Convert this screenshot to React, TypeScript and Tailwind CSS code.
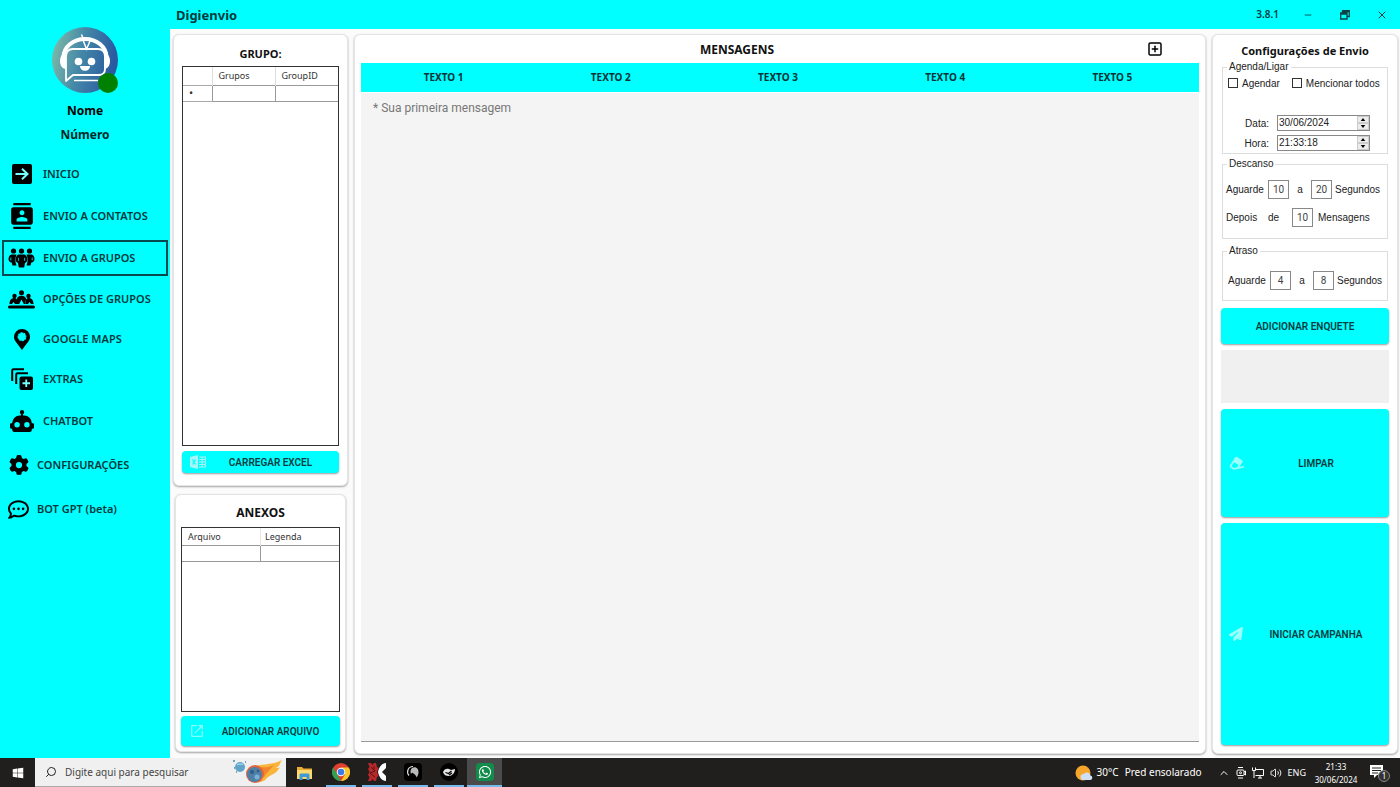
import React from "react";
import { MdContacts, MdOpenInNew } from "react-icons/md";
import { FaGear, FaPaperPlane, FaRegCommentDots } from "react-icons/fa6";
import { FaEraser, FaWhatsapp, FaWindows } from "react-icons/fa";
import { ChevronUp, Search, SquarePlus, Minus, X, Volume2 } from "lucide-react";

function AvatarIcon() {
  return (
    <svg viewBox="0 0 66 66" className="size-full" aria-hidden="true">
      <defs>
        <linearGradient id="avatar" x1="0" y1="0" x2="1" y2="0.2">
          <stop offset="0" stopColor="#86c0a8" />
          <stop offset="0.5" stopColor="#4488a8" />
          <stop offset="1" stopColor="#2a5aa0" />
        </linearGradient>
      </defs>
      <circle cx="33" cy="33" r="33" fill="url(#avatar)" />
      <path d="M11.500 30A21.500 18 0 0 1 54.500 30" fill="none" stroke="#fff" strokeWidth="4" />
      <path d="M14 26c-8 0-8 16 0 16zM52 26c8 0 8 16 0 16z" fill="#fff" />
      <path d="M14 54V30c0-5 2-8 7-8h25c5 0 7 3 7 8v12c0 4-2 6-6 6H21z" fill="none" stroke="#fff" strokeWidth="1.8" strokeLinejoin="round" />
      <path d="M31 13l3.500 9 4-9M29.500 7.500l2 5M22 53.500h24" fill="none" stroke="#fff" strokeWidth="1.500" />
      <circle cx="26.500" cy="34.500" r="3.800" fill="#fff" />
      <circle cx="39.500" cy="34.500" r="3.800" fill="#fff" />
      <path d="M28 39h10c0 3-2 4.800-5 4.800S28 42 28 39z" fill="#fff" />
    </svg>
  );
}

function EnterIcon() {
  return (
    <svg viewBox="0 0 20 20" className="size-5">
      <rect width="20" height="20" rx="2" fill="#000" />
      <path d="M3.500 10h12M10 4.800l5.500 5.200-5.500 5.200" fill="none" stroke="#7ff" strokeWidth="2" />
    </svg>
  );
}

function CrowdIcon() {
  return (
    <svg viewBox="0 0 27 20" className="h-5 w-[27px]">
      <circle cx="5.500" cy="3" r="2.600" />
      <circle cx="13.500" cy="3" r="2.600" />
      <circle cx="21.500" cy="3" r="2.600" />
      <path d="M4 6.500h4.500C7 10 7 14 8.500 17.500H4.500l-.8-3C1.500 14.500.5 12.500.5 11c0-2.500 1.500-4.500 3.500-4.500zM23 6.500h-4.500C20 10 20 14 18.500 17.500h4l.8-3c2.200 0 3.200-2 3.200-3.500 0-2.500-1.500-4.500-3.500-4.500z" />
      <path d="M11 6.500h5c2 0 3.300 2.200 3.300 4.800 0 2-1 3.500-2.300 3.700l-.8 4.500h-5.400L10 15c-1.300-.2-2.300-1.700-2.300-3.700 0-2.600 1.300-4.800 3.300-4.800z" />
      <path d="M2.800 9.500v3M10.400 9.800v3M16.600 9.800v3M24.200 9.500v3" stroke="#0ff" strokeWidth=".8" />
    </svg>
  );
}

function TableGroupIcon() {
  return (
    <svg viewBox="0 0 27 19" className="h-[19px] w-[27px]">
      <circle cx="13.500" cy="2.800" r="2.500" />
      <circle cx="6.500" cy="6" r="2.200" />
      <circle cx="20.500" cy="6" r="2.200" />
      <path d="M9 14V9c0-2 1.800-3.300 4.500-3.300S18 7 18 9v5h-2.200l-2.300-4.500-2.300 4.500zM1.500 14c0-4 2-6 5-6 1.800 0 2.800 1.500 2.800 3v3H7l-1.500-2L4 14zM25.500 14c0-4-2-6-5-6-1.800 0-2.800 1.500-2.800 3v3H20l1.500-2L23 14z" />
      <rect y="15.500" width="27" height="3" rx="1.500" />
    </svg>
  );
}

function PinIcon() {
  return (
    <svg viewBox="0 0 16 21" className="h-[21px] w-4">
      <path fillRule="evenodd" d="M8 0a8 8 0 0 1 8 8c0 4-4 7-8 13C4 15 0 12 0 8a8 8 0 0 1 8-8zm0 3.300a4.500 4.500 0 1 0 0 9 4.500 4.500 0 0 0 0-9z" />
      <circle cx="8" cy="7.800" r="4.300" fill="none" stroke="#000" strokeWidth="1" strokeDasharray="1.200 2.200" />
    </svg>
  );
}

function StackAddIcon() {
  return (
    <svg viewBox="0 0 22 22" className="size-[22px]">
      <path d="M1.200 13V2.500c0-1 .5-1.300 1.300-1.300H13M5.200 16V6.500c0-1 .5-1.300 1.300-1.300H17" fill="none" stroke="#000" strokeWidth="2" />
      <rect x="8.500" y="8.500" width="13.500" height="13.500" rx="2" />
      <path d="M15.250 11.500v7.500M11.500 15.250H19" stroke="#7ff" strokeWidth="1.800" />
    </svg>
  );
}

function RobotIcon() {
  return (
    <svg viewBox="1 2 22 20" className="h-[22px] w-6" preserveAspectRatio="none">
      <path d="M12 2a2 2 0 0 1 2 2c0 .74-.4 1.390-1 1.730V7h1a7 7 0 0 1 7 7h1a1 1 0 0 1 1 1v3a1 1 0 0 1-1 1h-1v1a2 2 0 0 1-2 2H5a2 2 0 0 1-2-2v-1H2a1 1 0 0 1-1-1v-3a1 1 0 0 1 1-1h1a7 7 0 0 1 7-7h1V5.730c-.6-.34-1-.99-1-1.730a2 2 0 0 1 2-2zM7.500 13A2.500 2.500 0 0 0 5 15.500 2.500 2.500 0 0 0 7.500 18a2.500 2.500 0 0 0 2.500-2.500A2.500 2.500 0 0 0 7.500 13zm9 0a2.500 2.500 0 0 0-2.500 2.500 2.500 2.500 0 0 0 2.500 2.500 2.500 2.500 0 0 0 2.500-2.500 2.500 2.500 0 0 0-2.500-2.500z" />
    </svg>
  );
}

function ExcelIcon() {
  return (
    <svg viewBox="0 0 16 14" className="h-3.5 w-4">
      <path d="M0 2l8-2v14l-8-2z" fill="#a5f6f6" />
      <path d="M2.500 4.500l3 5M5.500 4.500l-3 5" stroke="#0ff" strokeWidth="1.200" />
      <path d="M9 2h6.500v10H9M9 4.500h6.500M9 7h6.500M9 9.500h6.500M12.200 2v10" fill="none" stroke="#a5f6f6" strokeWidth="1.200" />
    </svg>
  );
}

function CometIcon() {
  return (
    <svg viewBox="0 0 52 24" className="h-6 w-[52px]">
      <circle cx="8" cy="7" r="5" fill="#5fa3c9" />
      <path d="M5 5c2-2 4 0 6-1" stroke="#9bd0ea" strokeWidth="1.500" fill="none" />
      <path d="M1 1h2M2 8h1M13 2h1M4 12h1" stroke="#4a88b0" strokeWidth="1.500" />
      <path d="M17 9C25 3 39 6 50 0c-3 4-1 5-6 8 2 0 3 0 4-1-4 8-9 7-13 11-3 4-8 5-11 4z" fill="#f9b43a" />
      <path d="M22 8c7-2 12 1 20-3-4 5-7 7-10 12z" fill="#f1862c" />
      <circle cx="23" cy="14" r="9" fill="#e2633c" />
      <circle cx="22.500" cy="14.500" r="7.500" fill="#4d7fa8" />
      <circle cx="20" cy="12" r="2" fill="#2f5c84" />
      <circle cx="25" cy="17" r="2.500" fill="#79b4d6" />
      <circle cx="26" cy="11" r="1.300" fill="#2f5c84" />
    </svg>
  );
}

function FolderIcon() {
  return (
    <svg viewBox="0 0 17 14" className="h-3.5 w-[17px]">
      <path d="M1 1h5l1.500 1.500H16V13H1z" fill="#e9ad35" />
      <path d="M1 4h15v9H1z" fill="#fbd96f" />
      <path d="M3.500 14V9c0-1 .5-1.500 1.500-1.500h7c1 0 1.500.5 1.500 1.500v5h-3v-3h-4v3z" fill="#3f9bd6" />
    </svg>
  );
}

function ChromeIcon() {
  return (
    <svg viewBox="0 0 18 18" className="size-[18px]">
      <circle cx="9" cy="9" r="9" fill="#e0402f" />
      <path d="M1.200 4.500L5.500 12l3.500 6A9 9 0 0 1 1.200 4.500z" fill="#2fa350" />
      <path d="M16.800 4.500H9l4 7L9 18a9 9 0 0 0 7.800-13.500z" fill="#fbc724" />
      <circle cx="9" cy="9" r="4.300" fill="#fff" />
      <circle cx="9" cy="9" r="3.300" fill="#3b7de8" />
    </svg>
  );
}

function KIcon() {
  return (
    <svg viewBox="0 0 18 18" className="size-[18px]">
      <path d="M0 0h3l1.500 2L6 0h2l1 4 1.500 1L9 9l1.500 4L9 14l-1 4H6l-1.500-2L3 18H0l1.500-4L0 12l1.500-3L0 6l1.500-2z" fill="#b7282b" />
      <path d="M3 4l4 4-5 2 5 4M6 3v4" stroke="#55181a" strokeWidth="1" fill="none" />
      <path d="M18 0v5l-4 4 4 4v5c-4 0-7-4-8-9 1-5 4-9 8-9z" fill="#fff" />
    </svg>
  );
}

function HorseIcon() {
  return (
    <svg viewBox="0 0 18 18" className="size-[18px]">
      <rect width="18" height="18" rx="4" fill="#000" />
      <path d="M5 12.500C2 9 4 3.500 9 3.500" fill="none" stroke="#ddd" strokeWidth="1.200" />
      <path d="M8 5c4-2 7 1 6.500 5-.3 2-1 3-2 4.500-.2-2-1.500-3-3-4-1-1-1.500-1-2.500.500C6 9 6.500 6.500 8 5z" fill="#b9b9b9" />
    </svg>
  );
}

function CrowIcon() {
  return (
    <svg viewBox="0 0 18 18" className="size-[18px]">
      <circle cx="9" cy="9" r="9" fill="#000" />
      <path d="M3 9c1-3 4-4 6-3l2 1 4-1c0 4-3 7-6 7-3 0-5-1-6-4z" fill="#e4e4e4" />
      <path d="M5.500 9.500l3 1 3-2.500M9 12l3-2" stroke="#000" fill="none" strokeWidth="1.300" />
    </svg>
  );
}

function SunCloudIcon() {
  return (
    <svg viewBox="0 0 18 16" className="h-4 w-[18px]">
      <circle cx="8" cy="8" r="7.500" fill="#f6a62b" />
      <path d="M8.500 15a3 3 0 0 1 0-6 4 4 0 0 1 7 1.500 2.300 2.300 0 0 1 0 4.500z" fill="#cfe0f5" />
    </svg>
  );
}

function RestoreIcon() {
  return (
    <svg viewBox="0 0 10 10" className="size-2.5">
      <path d="M2.500 2.500V.7h6.800v5.800H7.500M.7 3h6.300v6H.7zM.7 4h6.300M2.500 1.500h6.800" fill="none" stroke="#0b4444" strokeWidth="1.300" />
    </svg>
  );
}

type NavEntry = { label: string; icon: React.ReactNode; active?: boolean };

const navGroups: { gap: string; items: NavEntry[] }[] = [
  {
    gap: "gap-1.5",
    items: [
      { label: "INICIO", icon: <EnterIcon /> },
      { label: "ENVIO A CONTATOS", icon: <MdContacts className="size-[26px]" /> },
      { label: "ENVIO A GRUPOS", icon: <CrowdIcon />, active: true },
    ],
  },
  {
    gap: "gap-1",
    items: [
      { label: "OPÇÕES DE GRUPOS", icon: <TableGroupIcon /> },
      { label: "GOOGLE MAPS", icon: <PinIcon /> },
      { label: "EXTRAS", icon: <StackAddIcon /> },
    ],
  },
];

const lastItems: NavEntry[] = [
  { label: "CONFIGURAÇÕES", icon: <FaGear className="size-5" /> },
  { label: "BOT GPT (beta)", icon: <FaRegCommentDots className="size-[21px]" /> },
];

function NavItem({ label, icon, active, tight }: NavEntry & { tight?: boolean }) {
  return (
    <button
      type="button"
      aria-current={active ? "page" : undefined}
      className={
        "flex h-9 w-full items-center gap-1 border-2 text-left text-[11px] font-semibold text-[#04393c] " +
        (active ? "border-[#064a50]" : "border-transparent")
      }
    >
      <span className={"flex shrink-0 justify-center text-black " + (tight ? "w-[29px]" : "w-[35px]")}>{icon}</span>
      <span className="whitespace-nowrap">{label}</span>
    </button>
  );
}

function Sidebar() {
  return (
    <aside className="flex w-[170px] shrink-0 flex-col bg-[#00ffff] px-0.5">
      <div className="flex flex-col items-center pt-[27px] text-xs font-bold text-[#002628]">
        <div className="relative size-[66px]">
          <AvatarIcon />
          <span className="absolute right-0 bottom-0 size-5 rounded-full bg-[#008000]" />
        </div>
        <p className="mt-2.5 leading-4 text-black">Nome</p>
        <p className="mt-2 leading-4">Número</p>
      </div>
      <nav className="mt-[13px] flex flex-col">
        {navGroups.map((g) => (
          <div key={g.gap} className={"mb-[5px] flex flex-col " + g.gap}>
            {g.items.map((it) => (
              <NavItem key={it.label} {...it} />
            ))}
          </div>
        ))}
        <div className="mt-px flex flex-col gap-2">
          <NavItem label="CHATBOT" icon={<RobotIcon />} />
          {lastItems.map((it) => (
            <NavItem key={it.label} {...it} tight />
          ))}
        </div>
      </nav>
    </aside>
  );
}

const panel = "rounded-md border border-[#e4e4e4] bg-white shadow-[0_1px_2px_rgba(0,0,0,0.35)]";
const action =
  "rounded-sm bg-[#00ffff] font-[Roboto,sans-serif] text-[10px] font-semibold text-[#083c40] shadow-[0_1px_2px_rgba(0,0,0,0.4)]";
const heading = "text-center font-bold text-[#111] leading-4";

function GroupsPanel() {
  return (
    <section className={panel + " flex min-h-0 flex-[455_1_0] flex-col px-2 pt-[11px] pb-3"}>
      <h2 className={heading + " text-[11px]"}>GRUPO:</h2>
      <div className="mt-1 flex-1 border border-[#333]">
        <table className="w-full table-fixed border-collapse text-left text-[9px] text-[#333]">
          <thead>
            <tr className="h-[18px]">
              <th className="w-[29px] border-r border-[#ddd]" aria-label="Linha" />
              <th className="border-r border-[#ddd] pl-1.5 font-normal">Grupos</th>
              <th className="pl-1.5 font-normal">GroupID</th>
            </tr>
          </thead>
          <tbody>
            <tr className="h-4">
              <td className="border-y border-[#aaa] pl-1.5 text-[11px] leading-3">•</td>
              <td className="border border-[#999]" />
              <td className="border-y border-l border-[#999]" />
            </tr>
          </tbody>
        </table>
      </div>
      <button type="button" className={action + " mt-[5px] flex h-[22px] items-center pl-2"}>
        <ExcelIcon />
        <span className="flex-1 pr-1 text-center">CARREGAR EXCEL</span>
      </button>
    </section>
  );
}

function FilesPanel() {
  return (
    <section className={panel + " mr-0.5 ml-0.5 flex min-h-0 flex-[256_1_0] flex-col px-[5px] pt-[10px] pb-[5px]"}>
      <h2 className={heading + " text-xs"}>ANEXOS</h2>
      <div className="mt-1.5 flex-1 border border-[#333]">
        <table className="w-full table-fixed border-collapse text-left text-[9px] text-[#333]">
          <thead>
            <tr className="h-[17px]">
              <th className="border-r border-[#e5e5e5] pl-1.5 font-normal">Arquivo</th>
              <th className="pl-1 font-normal">Legenda</th>
            </tr>
          </thead>
          <tbody>
            <tr className="h-4">
              <td className="border-y border-r border-[#999]" />
              <td className="border-y border-[#999]" />
            </tr>
          </tbody>
        </table>
      </div>
      <button type="button" className={action + " mt-1 flex h-[30px] items-center pl-2"}>
        <MdOpenInNew className="size-4 text-[#8ff]" />
        <span className="flex-1 pr-1 text-center">ADICIONAR ARQUIVO</span>
      </button>
    </section>
  );
}

const tabs = ["TEXTO 1", "TEXTO 2", "TEXTO 3", "TEXTO 4", "TEXTO 5"];

function MessagesPanel() {
  return (
    <section className={panel + " flex min-w-0 flex-1 flex-col px-1.5 pb-[11px]"}>
      <div className="flex h-7 items-center justify-end pr-9">
        <h2 className="flex-1 pt-0.5 pr-[34px] text-center text-xs font-bold text-[#111]">MENSAGENS</h2>
        <button type="button" aria-label="Adicionar mensagem">
          <SquarePlus className="size-4" strokeWidth={2.2} />
        </button>
      </div>
      <div role="tablist" className="grid h-[29px] grid-cols-5 bg-[#00ffff] pr-0.5">
        {tabs.map((t, i) => (
          <button key={t} type="button" role="tab" aria-selected={i === 0} className="pr-0.5 text-[10px] font-bold text-[#063437]">
            {t}
          </button>
        ))}
      </div>
      <textarea
        aria-label="Mensagem"
        placeholder="* Sua primeira mensagem"
        className="mt-px flex-1 resize-none border-b border-[#999] bg-[#f4f4f4] px-3 py-[7px] font-[Roboto,sans-serif] text-xs text-[#333] outline-none placeholder:text-[#777]"
      />
    </section>
  );
}

function Stepper({ id, label, value }: { id: string; label: string; value: string }) {
  return (
    <div className="flex h-5 items-center">
      <label htmlFor={id} className="w-[54px] pr-2 text-right">
        {label}
      </label>
      <div className="flex h-4 w-[93px] border border-[#888] bg-white">
        <input id={id} defaultValue={value} className="w-0 min-w-0 flex-1 bg-transparent pl-px text-[10px] leading-3 outline-none" />
        <div className="flex w-3 flex-col bg-[#ececec]">
          <button type="button" aria-label={"Aumentar " + label} className="flex flex-1 items-center justify-center border border-[#ccc]">
            <svg viewBox="0 0 6 4" className="h-[3px] w-1.5">
              <path d="M3 0l3 4H0z" />
            </svg>
          </button>
          <button type="button" aria-label={"Diminuir " + label} className="flex flex-1 items-center justify-center border border-[#ccc]">
            <svg viewBox="0 0 6 4" className="h-[3px] w-1.5">
              <path d="M3 4L0 0h6z" />
            </svg>
          </button>
        </div>
      </div>
    </div>
  );
}

function NumberBox({ label, value }: { label: string; value: string }) {
  return (
    <input
      aria-label={label}
      defaultValue={value}
      className="h-[19px] w-[21px] shrink-0 border border-[#888] bg-white text-center font-[Roboto,sans-serif] text-[10px] text-[#444] outline-none"
    />
  );
}

const groupBox = "min-w-0 border border-[#ddd]";
const legend = "ml-1 px-0.5 text-[10px] leading-3";
const check = "size-2.5 appearance-none border border-[#333] bg-white checked:bg-[#333]";

function SettingsPanel() {
  return (
    <section className={panel + " flex w-[186px] shrink-0 flex-col px-2 pt-2 pb-2"}>
      <h2 className={heading + " text-[11px]"}>Configurações de Envio</h2>
      <div className="mx-px flex flex-col font-['Liberation_Sans',sans-serif] text-[10px] text-[#222]">
        <fieldset className={groupBox + " mt-0.5"}>
          <legend className={legend}>Agenda/Ligar</legend>
          <div className="flex h-5 items-center gap-3 pl-[5px] whitespace-nowrap">
            <label className="flex items-center gap-1">
              <input type="checkbox" className={check} />
              Agendar
            </label>
            <label className="flex items-center gap-1">
              <input type="checkbox" className={check} />
              Mencionar todos
            </label>
          </div>
          <div className="mt-5">
            <Stepper id="data" label="Data:" value="30/06/2024" />
            <Stepper id="hora" label="Hora:" value="21:33:18" />
          </div>
        </fieldset>
        <fieldset className={groupBox + " mt-1 pb-[7px]"}>
          <legend className={legend}>Descanso</legend>
          <div className="mt-[5px] flex h-7 items-center pl-[3px]">
            <span className="w-[42px]">Aguarde</span>
            <NumberBox label="Descanso mínimo" value="10" />
            <span className="w-[22px] text-center">a</span>
            <NumberBox label="Descanso máximo" value="20" />
            <span className="ml-[3px]">Segundos</span>
          </div>
          <div className="flex h-7 items-center pl-[3px]">
            <span className="w-[42px]">Depois</span>
            <span className="w-6">de</span>
            <NumberBox label="Quantidade de mensagens" value="10" />
            <span className="ml-[5px]">Mensagens</span>
          </div>
        </fieldset>
        <fieldset className={groupBox + " mt-1.5 pb-2"}>
          <legend className={legend}>Atraso</legend>
          <div className="mt-[11px] flex h-6 items-center pl-[5px]">
            <span className="w-[42px]">Aguarde</span>
            <NumberBox label="Atraso mínimo" value="4" />
            <span className="w-[22px] text-center">a</span>
            <NumberBox label="Atraso máximo" value="8" />
            <span className="ml-[3px]">Segundos</span>
          </div>
        </fieldset>
      </div>
      <button type="button" className={action + " mt-[7px] h-9"}>
        ADICIONAR ENQUETE
      </button>
      <div className="mt-1.5 h-[53px] bg-[#f0f0f0]" />
      <button type="button" className={action + " mt-1.5 flex h-[108px] items-center pl-2"}>
        <FaEraser className="size-3.5 -rotate-12 text-[#9ff]" />
        <span className="flex-1 text-center">LIMPAR</span>
      </button>
      <button type="button" className={action + " mt-1.5 flex flex-1 items-center pl-2"}>
        <FaPaperPlane className="size-3.5 text-[#9ff]" />
        <span className="flex-1 text-center">INICIAR CAMPANHA</span>
      </button>
    </section>
  );
}

const apps = [
  { name: "Google Chrome", icon: <ChromeIcon /> },
  { name: "K", icon: <KIcon /> },
  { name: "Editor", icon: <HorseIcon /> },
  { name: "Digienvio", icon: <CrowIcon /> },
];

function Taskbar() {
  return (
    <footer className="flex h-[29px] shrink-0 items-center bg-[#211f1d] text-[10px] text-white">
      <button type="button" aria-label="Iniciar" className="flex w-[35px] justify-center">
        <FaWindows className="size-3" />
      </button>
      <div className="flex h-full w-[251px] items-center border-b border-[#aaa] bg-[#f0f0f0] pr-0.5 pl-2.5">
        <Search className="size-3 -scale-x-100 text-[#222]" />
        <input
          aria-label="Pesquisar"
          placeholder="Digite aqui para pesquisar"
          className="ml-2 w-0 flex-1 bg-transparent text-[10px] outline-none placeholder:text-[#444]"
        />
        <CometIcon />
      </div>
      <button type="button" aria-label="Explorador de Arquivos" className="flex h-full w-[37px] items-center justify-center">
        <FolderIcon />
      </button>
      {apps.map((a) => (
        <button key={a.name} type="button" aria-label={a.name} className="flex h-full w-9 items-center justify-center px-[3px]">
          <span className="flex h-full w-full items-center justify-center border-b-2 border-[#76b9ed]">{a.icon}</span>
        </button>
      ))}
      <button type="button" aria-label="WhatsApp" className="flex h-full w-[35px] items-center justify-center border-b-2 border-[#76b9ed] bg-[#4a4b4a]">
        <span className="flex size-[18px] items-center justify-center rounded-sm bg-[#128c4b]">
          <FaWhatsapp className="size-3.5" />
        </span>
      </button>
      <div className="ml-auto flex h-full items-center">
        <SunCloudIcon />
        <span className="ml-1">30°C</span>
        <span className="ml-1.5">Pred ensolarado</span>
        <ChevronUp className="ml-4 size-3" />
        <svg viewBox="0 0 10 12" className="ml-1.5 h-3 w-2.5" fill="none" stroke="#fff">
          <rect x="1" y="3" width="7" height="5.500" rx="1" />
          <circle cx="4.500" cy="5.800" r="1" />
          <path d="M2 .5h5M2 11h5M8 5l1.500-1v4L8 7" />
        </svg>
        <svg viewBox="0 0 12 12" className="ml-1.5 size-3" fill="none" stroke="#fff">
          <path d="M4 2.500h7.500v6H3.500M6 11h4M8 8.500V11M.5.500v3h3v-3M2 3.500V11" />
        </svg>
        <Volume2 className="ml-1.5 size-3" strokeWidth={1.8} />
        <span className="ml-1.5 text-[9px]">ENG</span>
        <div className="ml-2 w-[44px] text-center text-[8px] leading-[13px] whitespace-nowrap">
          <p>21:33</p>
          <p>30/06/2024</p>
        </div>
        <button type="button" aria-label="Notificações: 1" className="relative mr-3 ml-3">
          <svg viewBox="0 0 18 18" className="size-[18px]">
            <path d="M0 1h13v10H7l-3 3v-3H0z" fill="#fff" />
            <path d="M2 4h9M2 6.500h9M2 9h6" stroke="#222" />
          </svg>
          <span className="absolute -right-0.5 bottom-0 flex size-3 items-center justify-center rounded-full border border-[#888] bg-[#333] text-[8px]">1</span>
        </button>
      </div>
    </footer>
  );
}

export default function App() {
  return (
    <div className="flex h-screen flex-col font-['Noto_Sans','Open_Sans',sans-serif]">
      <div className="flex min-h-0 flex-1">
        <Sidebar />
        <div className="flex min-w-0 flex-1 flex-col bg-[#fbfbfb]">
          <header className="flex h-[29px] shrink-0 items-center bg-[#00ffff] pl-1.5 text-[#04393c]">
            <h1 className="flex-1 pt-0.5 text-[13px] font-bold">Digienvio</h1>
            <span className="mr-6 text-[10px] font-semibold">3.8.1</span>
            <button type="button" aria-label="Minimizar" className="mr-[27px]">
              <Minus className="size-2.5" />
            </button>
            <button type="button" aria-label="Restaurar" className="mr-[26px]">
              <RestoreIcon />
            </button>
            <button type="button" aria-label="Fechar" className="mr-3">
              <X className="size-3" />
            </button>
          </header>
          <main className="flex min-h-0 flex-1 gap-1.5 pt-[5px] pr-0.5 pb-1 pl-[3px]">
            <div className="flex w-[175px] shrink-0 flex-col gap-2 pb-0.5">
              <GroupsPanel />
              <FilesPanel />
            </div>
            <MessagesPanel />
            <SettingsPanel />
          </main>
        </div>
      </div>
      <Taskbar />
    </div>
  );
}
